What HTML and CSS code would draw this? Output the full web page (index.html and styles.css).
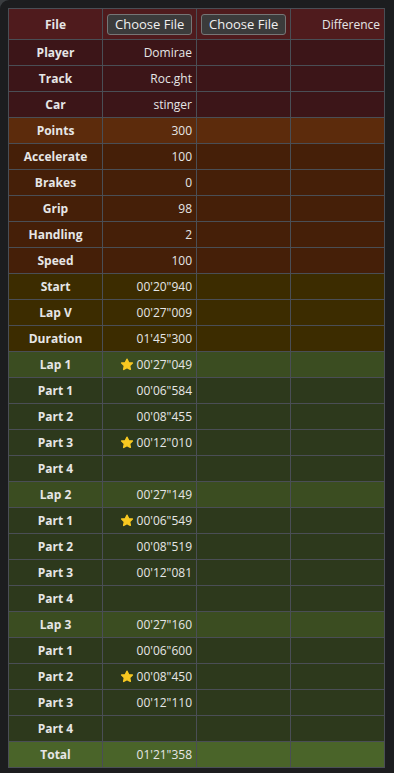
FILE: index.html
```html
<!DOCTYPE html>
<html lang="en">
<head>
    <meta charset="UTF-8">
    <meta name="viewport" content="width=device-width, initial-scale=1.0">
    <title>Ghost Compare</title>
    <link rel="stylesheet" href="styles.css">
</head>
<body>
    <table class="compare">
        <tr class="head">
            <th>File</th>
            <td class="pick"><button class="file-btn">Choose File</button></td>
            <td class="pick"><button class="file-btn">Choose File</button></td>
            <td class="diff">Difference</td>
        </tr>
        <tr class="info"><th>Player</th><td>Domirae</td><td></td><td></td></tr>
        <tr class="info"><th>Track</th><td>Roc.ght</td><td></td><td></td></tr>
        <tr class="info"><th>Car</th><td>stinger</td><td></td><td></td></tr>
        <tr class="points"><th>Points</th><td>300</td><td></td><td></td></tr>
        <tr class="stat"><th>Accelerate</th><td>100</td><td></td><td></td></tr>
        <tr class="stat"><th>Brakes</th><td>0</td><td></td><td></td></tr>
        <tr class="stat"><th>Grip</th><td>98</td><td></td><td></td></tr>
        <tr class="stat"><th>Handling</th><td>2</td><td></td><td></td></tr>
        <tr class="stat"><th>Speed</th><td>100</td><td></td><td></td></tr>
        <tr class="time"><th>Start</th><td>00'20"940</td><td></td><td></td></tr>
        <tr class="time"><th>Lap V</th><td>00'27"009</td><td></td><td></td></tr>
        <tr class="time"><th>Duration</th><td>01'45"300</td><td></td><td></td></tr>

        <tr class="lap"><th>Lap 1</th><td><span class="star"></span>00'27"049</td><td></td><td></td></tr>
        <tr class="part"><th>Part 1</th><td>00'06"584</td><td></td><td></td></tr>
        <tr class="part"><th>Part 2</th><td>00'08"455</td><td></td><td></td></tr>
        <tr class="part"><th>Part 3</th><td><span class="star"></span>00'12"010</td><td></td><td></td></tr>
        <tr class="part"><th>Part 4</th><td></td><td></td><td></td></tr>

        <tr class="lap"><th>Lap 2</th><td>00'27"149</td><td></td><td></td></tr>
        <tr class="part"><th>Part 1</th><td><span class="star"></span>00'06"549</td><td></td><td></td></tr>
        <tr class="part"><th>Part 2</th><td>00'08"519</td><td></td><td></td></tr>
        <tr class="part"><th>Part 3</th><td>00'12"081</td><td></td><td></td></tr>
        <tr class="part"><th>Part 4</th><td></td><td></td><td></td></tr>

        <tr class="lap"><th>Lap 3</th><td>00'27"160</td><td></td><td></td></tr>
        <tr class="part"><th>Part 1</th><td>00'06"600</td><td></td><td></td></tr>
        <tr class="part"><th>Part 2</th><td><span class="star"></span>00'08"450</td><td></td><td></td></tr>
        <tr class="part"><th>Part 3</th><td>00'12"110</td><td></td><td></td></tr>
        <tr class="part"><th>Part 4</th><td></td><td></td><td></td></tr>

        <tr class="total"><th>Total</th><td>01'21"358</td><td></td><td></td></tr>
    </table>

    <script>
        // best sector/lap marker
        const starSvg = '<svg width="14" height="13" viewBox="0 0 24 23"><path d="M12 2.2l2.9 6 6.6.8-4.9 4.6 1.3 6.5L12 16.9l-5.9 3.2 1.3-6.5L2.5 9l6.6-.8z" fill="#f8c921" stroke="#f8c921" stroke-width="2.6" stroke-linejoin="round"/></svg>';
        document.querySelectorAll('.star').forEach(function(el) {
            el.innerHTML = starSvg;
        });
    </script>
</body>
</html>
```

FILE: styles.css
```css
html {
    background: #3a3d40;
}
body {
    margin: 0;
    padding: 8px;
    min-height: 100vh;
    box-sizing: border-box;
    background: #1c1d1f;
    border-top-left-radius: 9px;
    font-family: "Open Sans", "Noto Sans", Arial, sans-serif;
    font-size: 12px;
    color: #e6e6e6;
}
.compare {
    width: 377px;
    border-collapse: collapse;
    table-layout: fixed;
}
.compare th,
.compare td {
    border: 1px solid #4a4e55;
    height: 25px;
    padding: 0 4px;
    white-space: nowrap;
    overflow: hidden;
}
.compare th {
    font-weight: bold;
    text-align: center;
}
.compare td {
    text-align: right;
}
.compare .head th,
.compare .head td {
    height: 30px;
}
.compare td.pick {
    text-align: left;
    padding: 0 4px;
}
.compare td.diff {
    overflow: visible;
}
.file-btn {
    font-family: inherit;
    font-size: 13px;
    color: #f0f0f0;
    background: #3b3b3b;
    border: 1px solid #767676;
    border-radius: 3px;
    height: 21px;
    padding: 0 7px;
    line-height: 18px;
}
.star {
    display: inline-block;
    vertical-align: -2px;
    margin-right: 3px;
}
.star svg {
    display: block;
}
.head { background: #4f1b1d; }
.info { background: #3c1518; }
.points { background: #5c2b0c; }
.stat { background: #451f08; }
.time { background: #3c2c00; }
.lap { background: #3b4d21; }
.part { background: #2d391c; }
.total { background: #4a6429; }
```
